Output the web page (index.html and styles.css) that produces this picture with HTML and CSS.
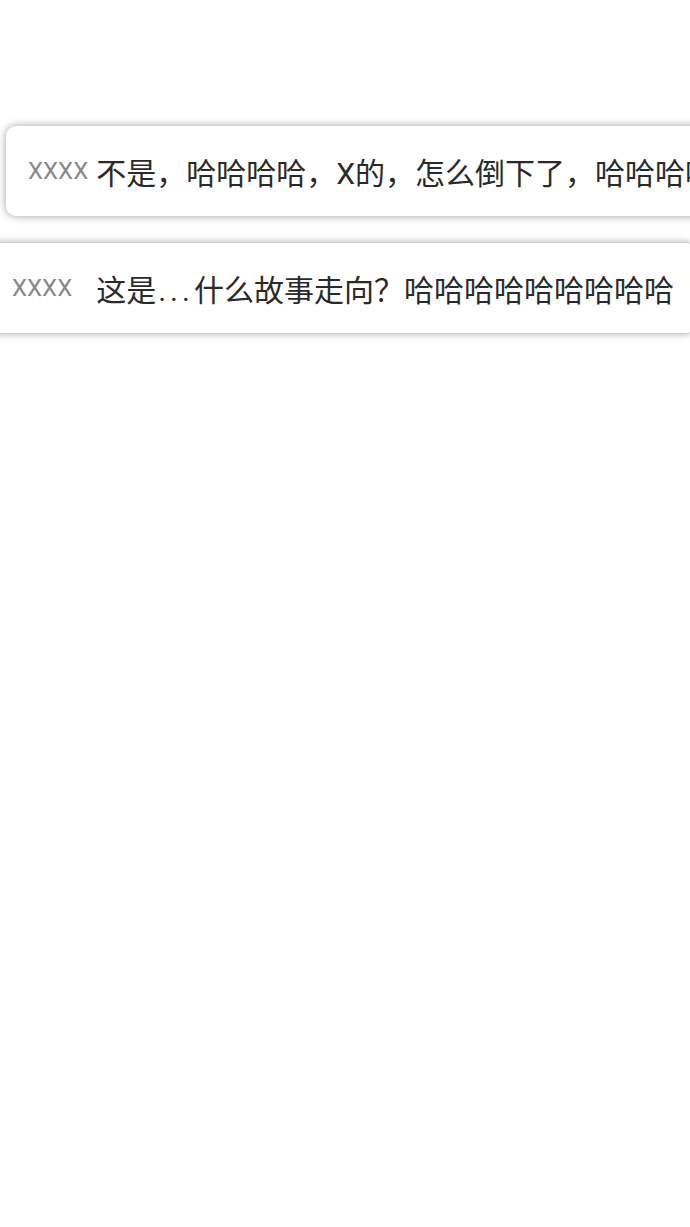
FILE: index.html
```
<!DOCTYPE html>
<html>
<head>
<meta charset="utf-8">
<title>弹幕</title>
<link rel="stylesheet" href="styles.css">
</head>
<body>
<div class="stage">
	<div class="bullet first">
		<span class="name">XXXX</span>
		<span class="msg">不是，哈哈哈哈，X的，怎么倒下了，哈哈哈哈哈哈</span>
	</div>
	<div class="bullet second">
		<span class="name">XXXX</span>
		<span class="msg">这是<span class="dots">...</span>什么故事走向？哈哈哈哈哈哈哈哈哈</span>
	</div>
</div>
</body>
</html>
```

FILE: styles.css
```
*{margin:0; padding:0;}
body{background:#fff; font-family:Roboto,"Noto Sans CJK SC",sans-serif; overflow:hidden;}
.stage{display:flex; flex-direction:column; align-items:flex-start; gap:27px; padding-top:126px; width:690px; height:1101px; overflow:hidden;}
.bullet{display:flex; align-items:center; height:90px; padding:0 22px; background:#fff; border-radius:10px; box-shadow:0 0 9px rgba(0,0,0,0.38); white-space:nowrap; flex-shrink:0;}
.bullet .name{font-size:24px; color:#888; margin-right:8px;}
.bullet .msg{font-size:30px; color:#2a2a2a;}
.bullet .dots{letter-spacing:4px; padding-left:2px;}
.first{margin-left:6px;}
.second{margin-left:-10px;}
.second .name{margin-right:24px;}
```
